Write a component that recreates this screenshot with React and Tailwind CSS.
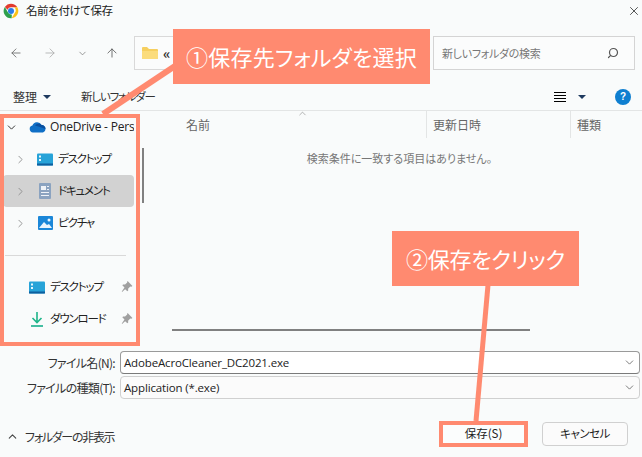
import React from "react";
import { ArrowLeft, ArrowRight, ArrowUp, ChevronDown, ChevronRight, ChevronUp, Search, X } from "lucide-react";

function ChromeLogo() {
  return (
    <svg width="16" height="16" viewBox="0 0 48 48">
      <path d="M24 2a22 22 0 0 1 19 11H24a11 11 0 0 0-10.400 7.300L5.600 12A22 22 0 0 1 24 2z" fill="#e33b2e" />
      <path d="M43 13a22 22 0 0 1-17 32.900l9.500-16.500A11 11 0 0 0 33.500 13z" fill="#fbc116" />
      <path d="M26 45.900A22 22 0 0 1 5.600 12l9.500 16.500a11 11 0 0 0 11.400 6z" fill="#2fa04c" />
      <circle cx="24" cy="24" r="9" fill="#2b7de9" />
    </svg>
  );
}

function FolderIcon() {
  return (
    <svg width="16" height="14" viewBox="0 0 16 14">
      <path d="M0 2a1 1 0 0 1 1-1h4l2 2h8a1 1 0 0 1 1 1v8a1 1 0 0 1-1 1H1a1 1 0 0 1-1-1z" fill="#f6cf5f" />
      <path d="M0 5h16v7a1 1 0 0 1-1 1H1a1 1 0 0 1-1-1z" fill="#fbdc7c" />
    </svg>
  );
}

function OneDriveIcon() {
  return (
    <svg width="17" height="12" viewBox="0 0 17 12">
      <path d="M4 11.500a3.500 3.500 0 0 1-.6-6.900A5 5 0 0 1 12.600 4a3.800 3.800 0 0 1 3.900 4 3.500 3.500 0 0 1-2.500 3.500z" fill="#0f6fc6" />
      <path d="M6 4.500a4.600 4.600 0 0 1 6.600-.5 3.800 3.800 0 0 1 3.900 4L11 6z" fill="#0a4f9e" />
    </svg>
  );
}

function DesktopIcon() {
  return (
    <svg width="16" height="13" viewBox="0 0 16 13">
      <rect width="16" height="12" y="0.500" rx="1" fill="#27a3d8" />
      <rect width="16" height="2" y="10.500" fill="#0e5f9e" />
      <rect x="2" y="2.500" width="2" height="2" fill="#e8f6fc" />
      <rect x="2" y="6" width="2" height="2" fill="#e8f6fc" />
    </svg>
  );
}

function DocIcon() {
  return (
    <svg width="12" height="16" viewBox="0 0 12 16">
      <rect width="12" height="16" rx="1" fill="#8ba3c0" />
      <rect x="2" y="3" width="5" height="4" fill="#eef2f7" />
      <rect x="8" y="3" width="2" height="1" fill="#eef2f7" />
      <rect x="8" y="6" width="2" height="1" fill="#eef2f7" />
      <rect x="2" y="9" width="8" height="1" fill="#eef2f7" />
      <rect x="2" y="12" width="8" height="1" fill="#eef2f7" />
    </svg>
  );
}

function PictureIcon() {
  return (
    <svg width="15" height="14" viewBox="0 0 15 14">
      <rect width="15" height="14" rx="1" fill="#1b87d8" />
      <path d="M1 12l5-6 3 3 2-1 3 4z" fill="#eaf5fd" />
      <circle cx="11" cy="4" r="1.500" fill="#eaf5fd" />
    </svg>
  );
}

function DownloadIcon() {
  return (
    <svg width="14" height="16" viewBox="0 0 14 16" fill="none" stroke="#1fb58a" strokeWidth="1.600">
      <path d="M7 1v10M2.500 7L7 11.500 11.500 7" />
      <path d="M1 15h12" stroke="#17b08c" />
    </svg>
  );
}

function Pin() {
  return (
    <svg width="12" height="12" viewBox="0 0 11 11" fill="#a0a0a0">
      <path d="M6.500 0.500l4 4-1 .7-1-.2-2 2 .1 1.800-.8.7-2-2L1 10l-.3-.3L3.200 6 1.200 4l.7-.8 1.800.1 2-2-.2-1z" />
    </svg>
  );
}

function TreeRow({ icon, label, selected }) {
  return (
    <div className={`h-8 flex items-center ml-[3px] mr-[6px] rounded-sm ${selected ? "bg-[#d2d2d2]" : ""}`}>
      <ChevronRight size={13} strokeWidth={1.6} className="ml-[11px] shrink-0 text-[#8a8a8a]" />
      <span className="ml-[10px] w-4 flex justify-center shrink-0">{icon}</span>
      <span className="ml-[5px] text-[11.5px] tracking-[-1.2px] text-[#222]">{label}</span>
    </div>
  );
}

function PinnedRow({ icon, label }) {
  return (
    <div className="h-8 flex items-center">
      <span className="ml-[29px] w-4 flex justify-center shrink-0">{icon}</span>
      <span className="ml-[5px] w-[71px] text-[11.5px] tracking-[-1.2px] text-[#222]">{label}</span>
      <Pin />
    </div>
  );
}

function FormRow({ label, value, active }) {
  return (
    <div className="flex items-center h-[23px]">
      <span className="w-[115px] text-right text-[12px] tracking-[-0.7px] text-[#333]">{label}</span>
      <div
        className={`ml-[5px] w-[520px] h-full flex items-center justify-between rounded-sm border pl-[3px] pr-[3px] ${
          active ? "border-[#9a9a9a] border-b-[#7a7a7a] bg-white" : "border-[#d0d0d0] bg-[#fbfbfb]"
        }`}
      >
        <span className="text-[11.5px] tracking-[-0.15px] text-[#222] font-['Open_Sans',sans-serif]">{value}</span>
        <ChevronDown size={13} strokeWidth={1.4} className="text-[#555]" />
      </div>
    </div>
  );
}

export default function App() {
  return (
    <div className="relative w-[642px] h-[457px] overflow-hidden bg-[#f9fbfb] font-['Noto_Sans_CJK_JP','Noto_Sans',sans-serif] [font-feature-settings:'palt']">
      {/* title bar */}
      <div className="h-[21px] flex items-center pl-[3px] pt-[1px] gap-[7px]">
        <ChromeLogo />
        <span className="text-[11.5px] tracking-[-0.4px] text-[#222]">名前を付けて保存</span>
        <X size={14} strokeWidth={1.2} className="ml-auto mr-[1px] text-[#111]" />
      </div>

      {/* address row */}
      <div className="mt-[15px] h-[34px] flex items-center">
        <ArrowLeft size={14} strokeWidth={1.4} className="ml-[9px] text-[#666]" />
        <ArrowRight size={14} strokeWidth={1.4} className="ml-[20px] text-[#aaa]" />
        <ChevronDown size={11} strokeWidth={1.6} className="ml-[20px] text-[#777]" />
        <ArrowUp size={14} strokeWidth={1.4} className="ml-[17px] text-[#555]" />
        <div className="ml-[15px] w-[296px] h-full flex items-center border border-[#d9d9d9] bg-[#fbfcfc] pl-[7px]">
          <FolderIcon />
          <span className="ml-[5px] text-[14px] leading-none font-bold text-[#333]">«</span>
        </div>
        <div className="ml-[3px] w-[202px] h-full flex items-center justify-between border border-[#d4d4d4] bg-[#fbfcfc] pl-[8px] pr-[15px]">
          <span className="text-[11px] tracking-[-0.3px] text-[#777]">新しいフォルダの検索</span>
          <Search size={12} strokeWidth={2.4} className="text-[#555] -scale-x-100" />
        </div>
      </div>

      {/* toolbar */}
      <div className="mt-[15px] h-[26px] flex items-center border-b border-[#e3e5e5] pb-[1px]">
        <span className="ml-[13px] text-[12px] text-[#333]">整理</span>
        <span className="ml-[6px] w-0 h-0 border-x-[4px] border-x-transparent border-t-[4px] border-t-[#1f3a5f]" />
        <span className="ml-[30px] text-[11.5px] tracking-[-1.2px] text-[#333]">新しいフォルダー</span>
        <div className="ml-auto flex flex-col gap-[2px] w-3">
          <span className="h-px bg-black" />
          <span className="h-px bg-black" />
          <span className="h-px bg-black" />
          <span className="h-px bg-black" />
        </div>
        <span className="ml-[12px] w-0 h-0 border-x-[4px] border-x-transparent border-t-[4px] border-t-[#1f3a5f]" />
        <span className="ml-[29px] mr-[11px] w-4 h-4 rounded-full bg-[#0f7fd0] flex items-center justify-center text-[10px] font-bold leading-none text-white font-['Liberation_Sans',sans-serif]">
          ?
        </span>
      </div>

      {/* main area */}
      <div className="h-[233px] flex">
        <div className="w-[140px] shrink-0">
          <div className="h-8 flex items-center">
            <ChevronDown size={13} strokeWidth={1.8} className="ml-[5px] text-[#333]" />
            <span className="ml-[11px]"><OneDriveIcon /></span>
            <span className="ml-[4px] w-[84px] overflow-hidden whitespace-nowrap text-[12px] tracking-[-0.2px] text-[#222] font-['Open_Sans',sans-serif]">
              OneDrive - Personal
            </span>
          </div>
          <TreeRow icon={<DesktopIcon />} label="デスクトップ" />
          <TreeRow icon={<DocIcon />} label="ドキュメント" selected />
          <TreeRow icon={<PictureIcon />} label="ピクチャ" />
          <div className="mt-[16px] mb-[15px] ml-[5px] w-[121px] h-px bg-[#d9d9d9]" />
          <PinnedRow icon={<DesktopIcon />} label="デスクトップ" />
          <PinnedRow icon={<DownloadIcon />} label="ダウンロード" />
        </div>

        <div className="w-[5px] shrink-0">
          <div className="mt-[37px] ml-[2px] w-[2px] h-[55px] bg-[#808080]" />
        </div>

        <div className="flex-1 flex flex-col">
          <div className="relative h-[27px] flex items-center text-[12px] text-[#666]">
            <span className="ml-[41px] w-[240px]">名前</span>
            <span className="w-px h-full bg-[#e3e5e5]" />
            <span className="ml-[6px] w-[137px]">更新日時</span>
            <span className="w-px h-full bg-[#e3e5e5]" />
            <span className="ml-[6px]">種類</span>
            <ChevronUp size={11} strokeWidth={1.2} className="absolute left-[152px] -top-[3px] text-[#777]" />
          </div>
          <p className="mt-[12px] text-center ml-[12px] text-[11px] text-[#777]">
            検索条件に一致する項目はありません。
          </p>
          <div className="mt-auto mb-[13px] ml-[27px] w-[358px] h-[2px] bg-[#808080]" />
        </div>
      </div>

      {/* form */}
      <div className="mt-[7px] flex flex-col gap-[2px]">
        <FormRow label="ファイル名(N):" value="AdobeAcroCleaner_DC2021.exe" active />
        <FormRow label="ファイルの種類(T):" value="Application (*.exe)" />
      </div>

      {/* footer */}
      <div className="mt-[22px] h-[26px] flex items-center">
        <ChevronUp size={13} strokeWidth={2} className="ml-[6px] mt-[5px] text-[#444]" />
        <span className="ml-[6px] mt-[5px] text-[12px] tracking-[-1.3px] text-[#333]">フォルダーの非表示</span>
        <div className="ml-auto w-[89px] h-full flex items-center justify-center border-[4px] border-[#ff8a70] bg-[#fbfdfd] text-[11.5px] text-[#222]">
          保存(S)
        </div>
        <div className="ml-[14px] mr-[14px] w-[86px] h-[24px] flex items-center justify-center rounded border border-[#d0d0d0] bg-[#fbfbfb] text-[11.5px] tracking-[-0.5px] text-[#222]">
          キャンセル
        </div>
      </div>

      {/* annotations over the dialog */}
      <svg className="absolute inset-0 pointer-events-none" width="642" height="457">
        <path d="M175 66L103 114" stroke="#ff8a70" strokeWidth="6" />
        <path d="M488 285L476 421" stroke="#ff8a70" strokeWidth="5" />
      </svg>
      <div className="absolute left-0 top-[114px] w-[140px] h-[232px] border-[4px] border-[#ff8a70]" />
      <div className="absolute left-[173px] top-[29px] w-[257px] h-[55px] flex items-center justify-center bg-[#ff8a70] text-[22px] tracking-[0.2px] text-white">
        ①保存先フォルダを選択
      </div>
      <div className="absolute left-[392px] top-[231px] w-[187px] h-[55px] flex items-center justify-center bg-[#ff8a70] text-[22px] tracking-[-0.3px] text-white">
        ②保存をクリック
      </div>
    </div>
  );
}
